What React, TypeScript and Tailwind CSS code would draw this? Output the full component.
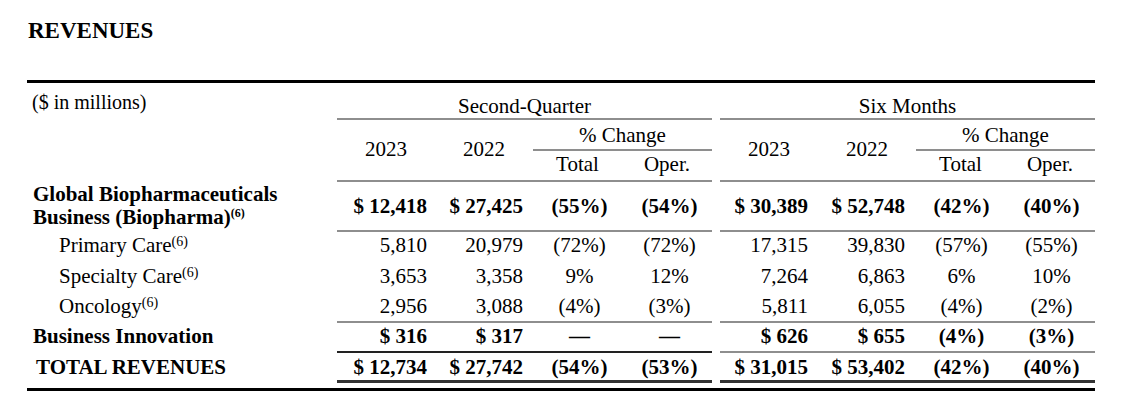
import type { ReactNode } from 'react';

const COLS = 'grid grid-cols-[310px_98px_98px_89px_90px_8px_98px_98px_89px_90px]';
const RULE = 'border-[#8e8e8e]';

const VALUE_CELL_CLASS = [
  'pr-[8px] text-right',
  'pr-[10px] text-right',
  'pl-[4px] text-center',
  'pl-[5px] text-center',
  'pr-[10px] text-right',
  'pr-[11px] text-right',
  'pl-[2px] text-center',
  'pl-[3px] text-center',
];

interface RowProps {
  label: ReactNode;
  values: string[];
  labelClass: string;
  rowClass: string;
  cellClass: string;
  q2Border?: string;
  sixBorder?: string;
}

function Row({ label, values, labelClass, rowClass, cellClass, q2Border = '', sixBorder = '' }: RowProps) {
  return (
    <div className={`${COLS} ${rowClass}`}>
      <div className={labelClass}>{label}</div>
      {values.slice(0, 4).map((value, index) => (
        <div className={`${cellClass} ${q2Border} ${VALUE_CELL_CLASS[index]}`} key={`q-${index}`}>
          {value}
        </div>
      ))}
      <div />
      {values.slice(4).map((value, index) => (
        <div className={`${cellClass} ${sixBorder} ${VALUE_CELL_CLASS[index + 4]}`} key={`s-${index}`}>
          {value}
        </div>
      ))}
    </div>
  );
}

function Sup({ bold = false }: { bold?: boolean }) {
  return (
    <sup className={bold ? 'top-[-7px] text-[12px] leading-none' : 'top-[-6px] text-[14px] font-normal leading-none'}>
      (6)
    </sup>
  );
}

const SEGMENTS = [
  { name: 'Primary Care', values: ['5,810', '20,979', '(72%)', '(72%)', '17,315', '39,830', '(57%)', '(55%)'], rowClass: 'h-[31px]' },
  { name: 'Specialty Care', values: ['3,653', '3,358', '9%', '12%', '7,264', '6,863', '6%', '10%'], rowClass: 'h-[30px]' },
  { name: 'Oncology', values: ['2,956', '3,088', '(4%)', '(3%)', '5,811', '6,055', '(4%)', '(2%)'], rowClass: 'h-[30px]' },
];

function HeaderGroup({ title, colStart }: { title: string; colStart: 'q2' | 'six' }) {
  const isQ2 = colStart === 'q2';
  return (
    <>
      <div
        className={`${isQ2 ? 'col-start-2' : 'col-start-7'} col-span-4 row-start-1 border-b-2 ${RULE} pt-[10px] text-center`}
      >
        {title}
      </div>
      <div className={`${isQ2 ? 'col-start-2' : 'col-start-7'} row-span-2 row-start-2 border-b-2 ${RULE} pt-[16px] text-center`}>
        2023
      </div>
      <div className={`${isQ2 ? 'col-start-3' : 'col-start-8'} row-span-2 row-start-2 border-b-2 ${RULE} pt-[16px] text-center`}>
        2022
      </div>
      <div className={`${isQ2 ? 'col-start-4' : 'col-start-9'} col-span-2 row-start-2 border-b-2 ${RULE} pt-[2px] text-center`}>
        % Change
      </div>
      <div className={`${isQ2 ? 'col-start-4' : 'col-start-9'} row-start-3 border-b-2 ${RULE} text-center`}>
        Total
      </div>
      <div className={`${isQ2 ? 'col-start-5' : 'col-start-10'} row-start-3 border-b-2 ${RULE} text-center`}>
        Oper.
      </div>
    </>
  );
}

export default function App() {
  return (
    <div className="h-[409px] w-[1140px] overflow-hidden bg-white font-['Liberation_Serif','Times_New_Roman',serif] text-[21px] leading-[26px] text-black">
      <h1 className="pl-[28px] pt-[19px] text-[23px] font-bold leading-[23px]">REVENUES</h1>

      <div className="ml-[27px] mt-[38px] w-[1068px] border-t-[3px] border-black">
        <div className={`${COLS} grid-rows-[37px_31px_31px]`}>
          <div className="col-start-1 row-span-3 row-start-1 pl-[5px] pt-[6px] text-[20px]">($ in millions)</div>
          <HeaderGroup colStart="q2" title="Second-Quarter" />
          <HeaderGroup colStart="six" title="Six Months" />
        </div>

        <Row
          cellClass="pt-[11px] font-bold"
          label={
            <>
              Global Biopharmaceuticals
              <br />
              Business (Biopharma)
              <Sup bold />
            </>
          }
          labelClass="pl-[6px] pt-[1px] font-bold leading-[23px]"
          q2Border={`border-b-2 ${RULE}`}
          rowClass="h-[50px]"
          sixBorder={`border-b-2 ${RULE}`}
          values={['$ 12,418', '$ 27,425', '(55%)', '(54%)', '$ 30,389', '$ 52,748', '(42%)', '(40%)']}
        />

        {SEGMENTS.map((segment, index) => {
          const isLast = index === SEGMENTS.length - 1;
          return (
            <Row
              cellClass=""
              key={segment.name}
              label={
                <>
                  {segment.name}
                  <Sup />
                </>
              }
              labelClass="pl-[32px]"
              q2Border={isLast ? `border-b-2 ${RULE}` : ''}
              rowClass={segment.rowClass}
              sixBorder={isLast ? `border-b-2 ${RULE}` : ''}
              values={segment.values}
            />
          );
        })}

        <Row
          cellClass="font-bold"
          label="Business Innovation"
          labelClass="pl-[6px] font-bold"
          q2Border="border-b-2 border-[#222]"
          rowClass="h-[30px]"
          sixBorder={`border-b-2 ${RULE}`}
          values={['$ 316', '$ 317', '—', '—', '$ 626', '$ 655', '(4%)', '(3%)']}
        />

        <Row
          cellClass="pt-[1px] font-bold"
          label="TOTAL REVENUES"
          labelClass="pl-[9px] pt-[1px] font-bold"
          q2Border="border-b-2 border-[#333]"
          rowClass="h-[26px]"
          sixBorder="border-b-2 border-[#333]"
          values={['$ 12,734', '$ 27,742', '(54%)', '(53%)', '$ 31,015', '$ 53,402', '(42%)', '(40%)']}
        />

        <div className={`${COLS} mt-[2px] h-[2px]`}>
          <div />
          <div className="col-span-4 bg-[#333]" />
          <div />
          <div className="col-span-4 bg-[#333]" />
        </div>

        <div className="mt-[5px] border-t-[3px] border-black" />
      </div>
    </div>
  );
}
